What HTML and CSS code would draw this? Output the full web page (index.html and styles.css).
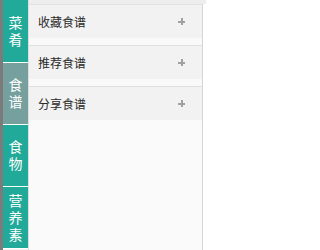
FILE: index.html
```html
<!DOCTYPE html>
<html>
<head>
<meta charset="utf-8">
<link rel="stylesheet" href="styles.css">
</head>
<body>
<div class="app">
  <div class="edge"></div>
  <nav class="side">
    <div class="tab active"><span class="ch">菜</span><span class="ch">肴</span></div>
    <div class="tab muted"><span class="ch">食</span><span class="ch">谱</span></div>
    <div class="tab active"><span class="ch">食</span><span class="ch">物</span></div>
    <div class="tab active"><span class="ch">营</span><span class="ch">养</span><span class="ch">素</span></div>
  </nav>
  <div class="main">
    <div class="topbar"></div>
    <div class="panel">
      <div class="item">
        <div class="head"><span class="title">收藏食谱</span><span class="plus"></span></div>
        <div class="body"></div>
      </div>
      <div class="item">
        <div class="head"><span class="title">推荐食谱</span><span class="plus"></span></div>
        <div class="body"></div>
      </div>
      <div class="item">
        <div class="head"><span class="title">分享食谱</span><span class="plus"></span></div>
        <div class="body last"></div>
      </div>
    </div>
  </div>
</div>
</body>
</html>
```

FILE: styles.css
```css
html, body {
  margin: 0;
  padding: 0;
  background: #ffffff;
}
.app {
  display: flex;
  width: 206px;
  height: 250px;
  font-family: "Noto Sans CJK SC", sans-serif;
}
.edge {
  width: 3px;
  background: #7b7b7b;
  flex: none;
}
.side {
  width: 25px;
  flex: none;
  display: flex;
  flex-direction: column;
  border-right: 1px solid #dedede;
  background: #f3f3f3;
}
.tab {
  height: 61px;
  border-bottom: 1px solid #ffffff;
  display: flex;
  flex-direction: column;
  align-items: center;
  justify-content: center;
  gap: 3px;
}
.tab:first-child {
  height: 62px;
}
.ch {
  writing-mode: vertical-rl;
  color: #ffffff;
  font-size: 14px;
  line-height: 14px;
  height: 14px;
}
.tab.active {
  background: #21a999;
}
.tab.muted {
  background: #75a09e;
}
.main {
  flex: 1;
  display: flex;
  flex-direction: column;
  background: #ffffff;
}
.topbar {
  height: 4px;
  background: #ededed;
  flex: none;
}
.panel {
  flex: 1;
  width: 173px;
  background: #fafafa;
  border-top: 1px solid #e2e2e2;
  border-right: 1px solid #d6d6d6;
}
.head {
  height: 33px;
  background: #f2f2f2;
  display: flex;
  align-items: center;
  justify-content: space-between;
  padding: 0 17px 0 9px;
}
.title {
  font-size: 12px;
  color: #2a2a2a;
}
.plus {
  position: relative;
  width: 7px;
  height: 7px;
}
.plus::before, .plus::after {
  content: "";
  position: absolute;
  background: #a0a0a0;
}
.plus::before {
  left: 0;
  top: 2.5px;
  width: 7px;
  height: 2px;
}
.plus::after {
  left: 2.5px;
  top: 0;
  width: 2px;
  height: 7px;
}
.body {
  height: 7px;
  background: #f9f9f9;
  border-bottom: 1px solid #e0e0e0;
}
.body.last {
  border-bottom: none;
}
```
